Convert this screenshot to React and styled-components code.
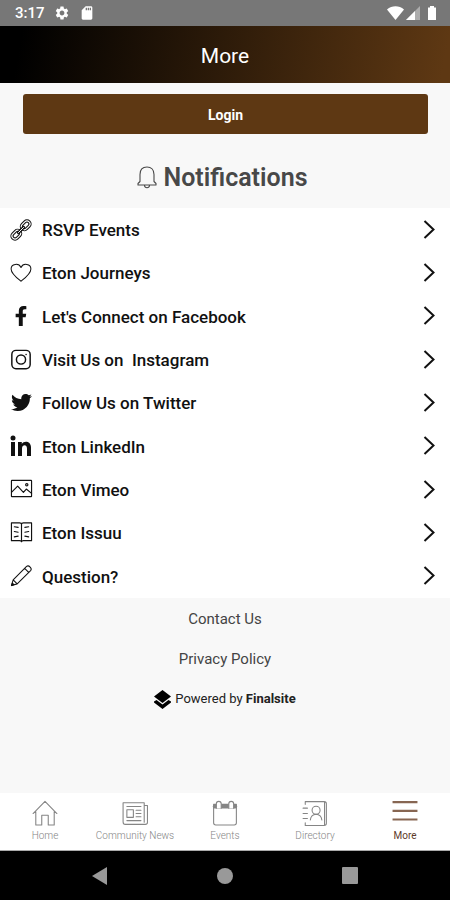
/** @format */

import React from 'react';
import styled, { createGlobalStyle } from 'styled-components';
import { FaFacebookF, FaTwitter } from 'react-icons/fa';
import { MdSettings, MdSdCard } from 'react-icons/md';

const GlobalStyle = createGlobalStyle`
  * {
    box-sizing: border-box;
  }

  body {
    margin: 0;
    background: #f8f8f8;
    font-family: Roboto, 'Liberation Sans', sans-serif;
  }
`;

const Screen = styled.div`
  display: flex;
  flex-direction: column;
  min-height: 100vh;
`;

const StatusBar = styled.div`
  display: flex;
  align-items: center;
  justify-content: space-between;
  height: 26px;
  padding: 0 14px 0 15px;
  background: #777;
  color: #fff;
  font-size: 15px;
  font-weight: 500;
`;

const StatusGroup = styled.div`
  display: flex;
  align-items: center;
  gap: ${({ $gap }) => $gap}px;
`;

const Header = styled.header`
  display: flex;
  align-items: center;
  justify-content: center;
  height: 57px;
  background: linear-gradient(100deg, #000 5%, #5e3813 98%);
`;

const Title = styled.h1`
  margin: 0;
  padding-top: 2px;
  color: #fff;
  font-size: 21px;
  font-weight: 400;
`;

const Main = styled.main`
  flex: 1;
  display: flex;
  flex-direction: column;
`;

const LoginButton = styled.button`
  height: 40px;
  margin: 11px 22px 0 23px;
  padding: 2px 0 0;
  border: 0;
  border-radius: 3px;
  background: #5e3813;
  color: #fff;
  font-family: inherit;
  font-size: 14px;
  font-weight: 700;
`;

const SectionTitle = styled.h2`
  display: flex;
  align-items: center;
  justify-content: center;
  gap: 5px;
  height: 74px;
  margin: 0;
  padding: 13px 8px 0 0;
  color: #484848;
  font-size: 25px;
  font-weight: 600;
`;

const List = styled.ul`
  display: grid;
  grid-auto-rows: 1fr;
  min-height: 390px;
  margin: 0;
  padding: 0;
  background: #fff;
  list-style: none;
`;

const Row = styled.a`
  display: flex;
  align-items: center;
  gap: 10px;
  height: 100%;
  padding: 0 15px 0 10px;
  color: #111;
  font-size: 17px;
  font-weight: 500;
  text-decoration: none;
`;

const RowLabel = styled.span`
  flex: 1;
  padding-top: 1px;
  white-space: pre;
`;

const Footer = styled.footer`
  display: flex;
  flex-direction: column;
  align-items: center;
  padding-top: 1px;
`;

const FooterLink = styled.a`
  color: #444;
  font-size: 15px;
  line-height: 40px;
  text-decoration: none;
`;

const PoweredBy = styled.p`
  display: flex;
  align-items: center;
  gap: 4px;
  margin: 0;
  color: #222;
  font-size: 13px;
  line-height: 40px;
`;

const TabBar = styled.nav`
  display: grid;
  grid-template-columns: repeat(5, 1fr);
  height: 58px;
  background: #fff;
  border-bottom: 1px solid #aaa;
`;

const Tab = styled.a`
  display: flex;
  flex-direction: column;
  align-items: center;
  gap: 4px;
  padding-top: 7px;
  color: ${({ $active }) => ($active ? '#5e3a2a' : '#858585')};
  font-size: 10px;
  font-weight: ${({ $active }) => ($active ? 400 : 300)};
  line-height: 12px;
  text-decoration: none;
  white-space: nowrap;
`;

const SystemNav = styled.div`
  display: flex;
  align-items: center;
  justify-content: center;
  gap: 97px;
  height: 49px;
  background: #000;
`;

const SystemButton = styled.button`
  display: flex;
  padding: 0;
  border: 0;
  background: none;
`;

const Line = styled.svg.attrs({ viewBox: '0 0 24 24', 'aria-hidden': true })`
  flex: none;
  width: ${({ $size }) => $size || 24}px;
  height: ${({ $size }) => $size || 24}px;
  fill: none;
  stroke: currentColor;
  stroke-width: ${({ $weight }) => $weight || 1};
  stroke-linecap: round;
  stroke-linejoin: round;
`;

const Solid = styled.svg.attrs({ 'aria-hidden': true })`
  flex: none;
  fill: currentColor;
`;

const IconSlot = styled.span`
  display: flex;
  align-items: center;
  justify-content: center;
  width: 22px;
  height: 24px;
`;

const BellIcon = () => (
  <Line $weight={1.1}>
    <path d="M3 19h18v-1.500l-2-2V8.500C19 3.500 16 1 12 1S5 3.500 5 8.500v7l-2 2zM9.500 19.500c.3 3 4.700 3 5 0" />
  </Line>
);

const LinkIcon = () => (
  <Line $size={22}>
    <g transform="rotate(-45 12 12)">
      <g strokeWidth="3.600">
        <rect x="-.5" y="8.700" width="10.500" height="6.600" rx="3.300" />
        <rect x="14" y="8.700" width="10.500" height="6.600" rx="3.300" />
      </g>
      <g stroke="#fff" strokeWidth="1.300">
        <rect x="-.5" y="8.700" width="10.500" height="6.600" rx="3.300" />
        <rect x="14" y="8.700" width="10.500" height="6.600" rx="3.300" />
      </g>
      <path d="M8 12h8" strokeWidth="3.200" />
      <path d="M8 12h8" stroke="#fff" strokeWidth="1" />
    </g>
  </Line>
);

const HeartIcon = () => (
  <Line $size={22} $weight={1.1}>
    <path d="M12 21C7 17 1.200 12.500 1.200 7.500c0-5.500 8.300-7 10.800-1.500C14.500.5 22.800 2 22.800 7.500c0 5-5.800 9.500-10.800 13.500z" />
  </Line>
);

const InstagramIcon = () => (
  <Line $size={22} $weight={1.6}>
    <rect x="2" y="1.500" width="20" height="20" rx="4.500" />
    <circle cx="12" cy="11.500" r="5" />
    <path d="M17.500 6h.1" />
  </Line>
);

const LinkedInIcon = () => (
  <Solid width="22" height="22" viewBox="0 0 22 22">
    <circle cx="3" cy="3" r="2.500" />
    <path d="M1 7h4v14H1zM8 7h3.800v2c2-3.500 9.200-3.200 9.200 3.500V21h-4v-7.500c0-4.500-5-4-5 0V21H8z" />
  </Solid>
);

const PictureIcon = () => (
  <Line $size={23} $weight={1.2}>
    <rect x="1.500" y="2.500" width="21" height="17" rx=".5" />
    <path d="M2 14.500l6-6 6 6.500 3-3.500 5.500 4.500" />
    <circle cx="17.500" cy="7" r="1.200" />
  </Line>
);

const BookIcon = () => (
  <Line $size={23} $weight={1.2}>
    <path d="M12 3v18M1.500 2h8.500c1.200 0 2 .5 2 1.500 0-1 .8-1.500 2-1.500h8.500v18.500H14c-1.200 0-2 .4-2 1.200 0-.8-.8-1.200-2-1.200H1.500z" />
    <path d="M4.500 6l4 .7M4.500 11l4 .7M4.500 16.500l4-.7M19.500 6l-4 .7M19.500 11l-4 .7M19.500 16.500l-4-.7" />
  </Line>
);

const PencilIcon = () => (
  <Line $size={23} $weight={1.1}>
    <path d="M1.500 21.500l1.800-6L17.300 1.500c2.300-1.800 6.200 2 4.200 4.300L7.500 19.700zM3.300 15.500l4.200 4.200M15.300 3.500l4.200 4.200" />
    <path d="M1.700 21.300l.7-2.400 1.700 1.700z" fill="currentColor" />
  </Line>
);

const ChevronIcon = () => (
  <Solid width="12" height="20" viewBox="0 0 12 20">
    <path
      d="M1.500 1L10.500 9.500l-9 8.500"
      fill="none"
      stroke="#111"
      strokeWidth="2"
    />
  </Solid>
);

const HomeIcon = () => (
  <Line $size={26}>
    <path d="M1 12.500L12 1.200l11 11.300M3.500 10.500V23H9v-9h6v9h5.500V10.500" />
  </Line>
);

const NewsIcon = () => (
  <Line $size={26}>
    <path d="M20.500 2.500H1V20c0 1.500.5 2.500 2 2.500h18.500c1.500 0 2-.5 2-2V5h-3zM20.500 5v15.500" />
    <path d="M4.500 9h6v7h-6zM4.500 6h13M13 9.500h4.500M13 12.500h4.500M13 15.500h4.500M4.500 19h13" />
  </Line>
);

const CalendarIcon = () => (
  <Line $size={26}>
    <path d="M1.500 4h21v17c0 1.300-.7 2-2 2h-17c-1.300 0-2-.7-2-2z" />
    <path d="M2.500 6h19" strokeWidth="3.500" />
    <path
      d="M4 7.500V3.500c0-3 4.500-3 4.500 0v4M15.500 7.500V3.500c0-3 4.500-3 4.500 0v4"
      fill="#fff"
    />
  </Line>
);

const DirectoryIcon = () => (
  <Line $size={26}>
    <path d="M3 4V1.500h17.500c1.500 0 2 .5 2 2v18c0 1.200-.5 2-2 2H3V21M20.800 2v21M1 7.500h4M1 12.500h4M1 17h4" />
    <circle cx="13" cy="9.500" r="3.700" />
    <path d="M7.700 18.500c.3-3.200 2-5 5.300-5.300 3.300.3 5 2.100 5.300 5.300" />
  </Line>
);

const MenuIcon = () => (
  <Line $size={26} $weight={2}>
    <path
      d="M.5 2h23M.5 10h23M.5 18h23"
      stroke="#876652"
      strokeLinecap="butt"
    />
  </Line>
);

const links = [
  { label: 'RSVP Events', icon: <LinkIcon /> },
  { label: 'Eton Journeys', icon: <HeartIcon /> },
  { label: "Let's Connect on Facebook", icon: <FaFacebookF size={20} /> },
  { label: 'Visit Us on  Instagram', icon: <InstagramIcon /> },
  { label: 'Follow Us on Twitter', icon: <FaTwitter size={21} /> },
  { label: 'Eton LinkedIn', icon: <LinkedInIcon /> },
  { label: 'Eton Vimeo', icon: <PictureIcon /> },
  { label: 'Eton Issuu', icon: <BookIcon /> },
  { label: 'Question?', icon: <PencilIcon /> },
];

const tabs = [
  { label: 'Home', icon: <HomeIcon /> },
  { label: 'Community News', icon: <NewsIcon /> },
  { label: 'Events', icon: <CalendarIcon /> },
  { label: 'Directory', icon: <DirectoryIcon /> },
  { label: 'More', icon: <MenuIcon />, active: true },
];

function App() {
  return (
    <Screen>
      <GlobalStyle />
      <StatusBar>
        <StatusGroup $gap={9}>
          <span>3:17</span>
          <MdSettings size={16} />
          <MdSdCard size={16} />
        </StatusGroup>
        <StatusGroup $gap={2}>
          <Solid width="17" height="14" viewBox="0 0 17 14">
            <path d="M0 3.500C5-.8 12-.8 17 3.500L8.500 14z" />
          </Solid>
          <Solid width="14" height="14" viewBox="0 0 14 14">
            <path d="M14 0v14H0z" opacity=".4" />
            <path d="M9 5v9H0z" />
          </Solid>
          <Solid width="14" height="14" viewBox="0 0 14 14">
            <path d="M6 1.500h2V0h4v1.500h2V14H6z" />
          </Solid>
        </StatusGroup>
      </StatusBar>
      <Header>
        <Title>More</Title>
      </Header>
      <Main>
        <LoginButton type="button">Login</LoginButton>
        <SectionTitle>
          <BellIcon />
          Notifications
        </SectionTitle>
        <List>
          {links.map(({ label, icon }) => (
            <li key={label}>
              <Row href="#">
                <IconSlot>{icon}</IconSlot>
                <RowLabel>{label}</RowLabel>
                <ChevronIcon />
              </Row>
            </li>
          ))}
        </List>
        <Footer>
          <FooterLink href="#">Contact Us</FooterLink>
          <FooterLink href="#">Privacy Policy</FooterLink>
          <PoweredBy>
            <Solid width="17" height="19" viewBox="0 0 17 19" color="#000">
              <path d="M8.500 0L17 6.500 8.500 13 0 6.500zM0 11.500l2.500-1.600 6 4.600 6-4.600L17 11.500v1L8.500 19 0 12.500z" />
            </Solid>
            <span>
              Powered by <b>Finalsite</b>
            </span>
          </PoweredBy>
        </Footer>
      </Main>
      <TabBar>
        {tabs.map(({ label, icon, active }) => (
          <Tab key={label} href="#" $active={active}>
            {icon}
            {label}
          </Tab>
        ))}
      </TabBar>
      <SystemNav>
        <SystemButton type="button" aria-label="Back">
          <Solid width="28" height="18" viewBox="0 0 28 18" color="#999">
            <path d="M15 0v18L0 9z" />
          </Solid>
        </SystemButton>
        <SystemButton type="button" aria-label="Home screen">
          <Solid width="16" height="16" viewBox="0 0 16 16" color="#999">
            <circle cx="8" cy="8" r="8" />
          </Solid>
        </SystemButton>
        <SystemButton type="button" aria-label="Recent apps">
          <Solid width="28" height="17" viewBox="0 0 28 17" color="#999">
            <rect x="12" width="16" height="17" rx="1" />
          </Solid>
        </SystemButton>
      </SystemNav>
    </Screen>
  );
}

export default App;
